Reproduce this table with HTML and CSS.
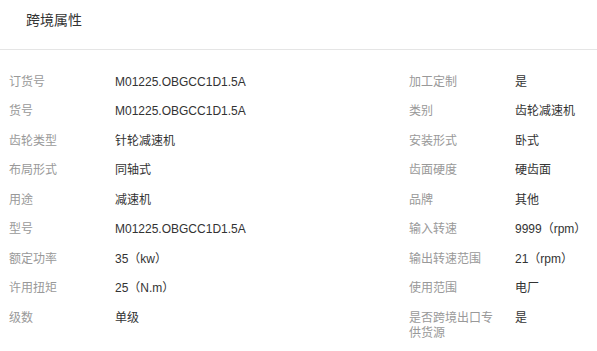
FILE: index.html
```html
<!DOCTYPE html>
<html lang="zh">
<head>
<meta charset="utf-8">
<link rel="stylesheet" href="styles.css">
</head>
<body>
<div class="panel">
  <div class="head">跨境属性</div>
  <div class="grid">
    <div class="col">
      <div class="row"><div class="lab">订货号</div><div class="val">M01225.OBGCC1D1.5A</div></div>
      <div class="row"><div class="lab">货号</div><div class="val">M01225.OBGCC1D1.5A</div></div>
      <div class="row"><div class="lab">齿轮类型</div><div class="val">针轮减速机</div></div>
      <div class="row"><div class="lab">布局形式</div><div class="val">同轴式</div></div>
      <div class="row"><div class="lab">用途</div><div class="val">减速机</div></div>
      <div class="row"><div class="lab">型号</div><div class="val">M01225.OBGCC1D1.5A</div></div>
      <div class="row"><div class="lab">额定功率</div><div class="val">35（kw）</div></div>
      <div class="row"><div class="lab">许用扭矩</div><div class="val">25（N.m）</div></div>
      <div class="row"><div class="lab">级数</div><div class="val">单级</div></div>
    </div>
    <div class="col">
      <div class="row"><div class="lab">加工定制</div><div class="val">是</div></div>
      <div class="row"><div class="lab">类别</div><div class="val">齿轮减速机</div></div>
      <div class="row"><div class="lab">安装形式</div><div class="val">卧式</div></div>
      <div class="row"><div class="lab">齿面硬度</div><div class="val">硬齿面</div></div>
      <div class="row"><div class="lab">品牌</div><div class="val">其他</div></div>
      <div class="row"><div class="lab">输入转速</div><div class="val">9999（rpm）</div></div>
      <div class="row"><div class="lab">输出转速范围</div><div class="val">21（rpm）</div></div>
      <div class="row"><div class="lab">使用范围</div><div class="val">电厂</div></div>
      <div class="row"><div class="lab">是否跨境出口专供货源</div><div class="val">是</div></div>
    </div>
  </div>
</div>
</body>
</html>
```
FILE: styles.css
```css
html, body {
  margin: 0;
  padding: 0;
  background: #fff;
}
body {
  font-family: "Liberation Sans", "Noto Sans CJK SC", sans-serif;
  color: #333;
}
.panel {
  width: 597px;
}
.head {
  height: 49px;
  line-height: 40px;
  padding: 0 26px;
  font-size: 14px;
  color: #333;
  border-bottom: 1px solid #e5e5e5;
  box-sizing: content-box;
}
.grid {
  display: grid;
  grid-template-columns: 400px 1fr;
  padding-top: 17.5px;
}
.col {
  display: flex;
  flex-direction: column;
  padding-left: 9px;
}
.row {
  display: flex;
  align-items: flex-start;
  padding: 7.25px 0;
  font-size: 12px;
  line-height: 15px;
}
.lab {
  width: 90px;
  margin-right: 16px;
  flex-shrink: 0;
  color: #999;
}
.val {
  color: #333;
}
```
